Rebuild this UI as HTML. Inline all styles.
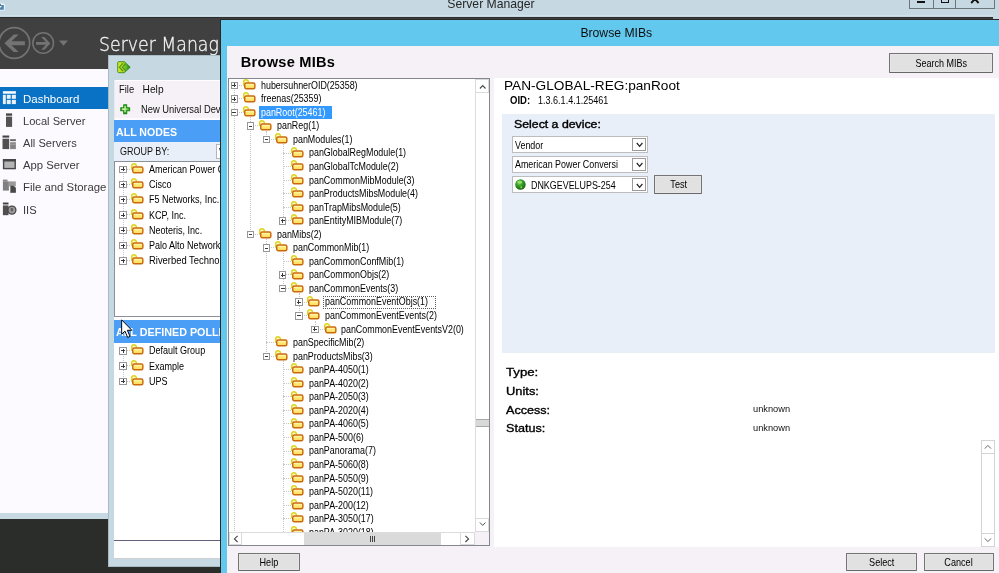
<!DOCTYPE html>
<html><head><meta charset="utf-8"><title>Server Manager</title>
<style>
html,body{margin:0;padding:0}
body{width:999px;height:573px;overflow:hidden;position:relative;background:#2b2d2b;font-family:"Liberation Sans",sans-serif;color:#000}
.a{position:absolute}
.sx{display:inline-block;transform-origin:0 50%;white-space:pre}
.t{position:absolute;white-space:pre;line-height:1}
svg{position:absolute;overflow:visible}
.fo{position:absolute}
/* tree */
.row{position:absolute;left:0;height:13.55px;white-space:pre}
.row .tx{position:absolute;top:0;font-size:11px;line-height:13.55px;color:#000}
.box{position:absolute;width:5.6px;height:5.6px;border:0.9px solid #979797;background:#fff}
.box i{position:absolute;left:0.9px;right:0.9px;top:2.35px;height:0.9px;background:#3a3a3a}
.box b{position:absolute;top:0.9px;bottom:0.9px;left:2.35px;width:0.9px;background:#3a3a3a}
.hl{position:absolute;border-top:1px dotted #c6c6c6;height:0}
.vl{position:absolute;border-left:1px dotted #c6c6c6;width:0}
.btn{position:absolute;box-sizing:border-box;border:1px solid #747474;border-bottom-color:#686868;border-radius:1px;background:#e1e1e1;box-shadow:inset 0 0 0 1px #e6e6e6;text-align:center;font-size:10.6px;color:#000}
.btn .sx{transform-origin:50% 50%}
.combo{position:absolute;box-sizing:border-box;border:1px solid #bdbdbd;background:#fff}
.combo .dd{position:absolute;right:1px;top:1px;bottom:1px;width:13.6px;box-sizing:border-box;border:1px solid #9a9a9a;background:#fff}
.nav{position:absolute;left:23.4px;font-size:11.7px;color:#3b3b3b;line-height:1;white-space:pre}
</style></head><body>
<div id="screen" style="position:absolute;left:0;top:0;width:999px;height:573px;overflow:hidden;will-change:transform">
<svg width="0" height="0" style="position:absolute"><defs>
<linearGradient id="fg" x1="0" y1="0" x2="0" y2="1"><stop offset="0" stop-color="#fffbd0"/><stop offset="0.5" stop-color="#ffea70"/><stop offset="1" stop-color="#ffd668"/></linearGradient>
<radialGradient id="gb" cx="0.4" cy="0.35" r="0.7"><stop offset="0" stop-color="#7ed04c"/><stop offset="0.5" stop-color="#2c9826"/><stop offset="1" stop-color="#156214"/></radialGradient>
</defs></svg>

<div class="a" id="sm" style="left:0;top:0;width:999px;height:519.2px;background:#c6d9e2"></div>
<div class="a" style="left:0;top:16.8px;width:993px;height:52.4px;background:#404040"></div>
<div class="a" style="left:0;top:16.6px;width:993px;height:1px;background:#2e2c2c"></div>
<div class="a" style="left:0;top:69px;width:993px;height:444.2px;background:#fdfaff"></div>
<div class="t" style="left:447.3px;top:-2.1px;font-size:12.2px;color:#262626">Server Manager</div>
<svg style="left:0;top:1px" width="6" height="10" viewBox="0 0 6 10"><path d="M-2 2.2 H1.6 V3.4 H3.6 Q4.4 3.4 4.4 4.2 V8.4 Q4.4 9.2 3.6 9.2 H-2 Z" fill="#4f85ad" stroke="#eef5f9" stroke-width="1.1"/><path d="M-1 5 H1.8 L1 6.4 H-1 Z" fill="#e8f1f6"/></svg>
<div class="a" style="left:0;top:15.2px;width:993px;height:1.3px;background:#cfe1e9"></div>
<div class="a" style="left:909.2px;top:-10px;width:85.8px;height:18.6px;box-sizing:border-box;border:1px solid #6f767b"></div>
<div class="a" style="left:933.2px;top:-10px;width:1px;height:18px;background:#6f767b"></div>
<div class="a" style="left:955px;top:-10px;width:1px;height:18px;background:#6f767b"></div>
<div class="a" style="left:917px;top:0.7px;width:8.2px;height:2.4px;background:#111"></div>
<div class="a" style="left:940.8px;top:-6px;width:8.4px;height:8.7px;box-sizing:border-box;border:1.9px solid #111"></div>
<svg style="left:970px;top:-6px" width="10" height="10" viewBox="0 0 10 10"><path d="M1.2 1 L8.6 9 M8.6 1 L1.2 9" stroke="#111" stroke-width="1.9" fill="none"/></svg>
<svg style="left:0;top:0" width="80" height="69" viewBox="0 0 80 69"><circle cx="14.3" cy="43.05" r="15.4" fill="none" stroke="#737373" stroke-width="1.7"/><path d="M4.4 43.25 L13.8 34.4 H18.7 L11.5 41.3 H24.9 V45.2 H11.5 L18.7 52.1 H13.8 Z" fill="#737373"/><circle cx="43.15" cy="43" r="10.35" fill="none" stroke="#737373" stroke-width="1.5"/><path d="M41.2 37 H44.4 L50.3 43.4 L44.4 49.8 H41.2 L45.9 44.8 H36.1 V42 H45.9 Z" fill="#737373"/><path d="M59 40.5 H68 L63.5 45.8 Z" fill="#737373"/></svg>
<div class="t" style="left:98.8px;top:34.7px;font-family:'DejaVu Sans','Liberation Sans',sans-serif;font-weight:200;font-size:19.9px;color:#f6f6f6;-webkit-text-stroke:0.3px #f6f6f6"><span class="sx" style="transform:scaleX(0.871);">Server Manager</span></div>
<div class="a" style="left:0;top:87.2px;width:108.4px;height:21.6px;background:#0a72c4"></div>
<div class="nav" style="top:93.4px;color:#fff;"><span class="sx" style="transform:scaleX(0.985);">Dashboard</span></div>
<div class="nav" style="top:115.4px;"><span class="sx" style="transform:scaleX(0.95);">Local Server</span></div>
<div class="nav" style="top:137.2px;"><span class="sx" style="transform:scaleX(0.95);">All Servers</span></div>
<div class="nav" style="top:159.3px;"><span class="sx" style="transform:scaleX(0.965);">App Server</span></div>
<div class="nav" style="top:181.4px;"><span class="sx" style="transform:scaleX(0.972);">File and Storage Services</span></div>
<div class="nav" style="top:203.5px;"><span class="sx" style="transform:scaleX(0.95);">IIS</span></div>
<svg style="left:0;top:0" width="20" height="152" viewBox="0 0 20 152"><rect x="2.9" y="91.2" width="13" height="2.5" fill="#fff"/><rect x="2.9" y="94.8" width="2.9" height="9.3" fill="#fff" opacity="0.9"/><rect x="6.8" y="94.8" width="3.9" height="4" fill="#fff" opacity="0.9"/><rect x="11.8" y="94.8" width="4.1" height="4" fill="#fff" opacity="0.9"/><rect x="6.8" y="99.9" width="3.9" height="4.2" fill="#fff" opacity="0.9"/><rect x="11.8" y="99.9" width="4.1" height="4.2" fill="#fff" opacity="0.9"/><rect x="6" y="113.4" width="6.1" height="2.3" fill="#444"/><rect x="6" y="116.6" width="6.1" height="10.3" fill="#545454"/><rect x="2.5" y="135.5" width="6.7" height="2.1" fill="#444"/><rect x="2.5" y="138.7" width="6.7" height="10.4" fill="#505050"/><rect x="10.1" y="139.2" width="5.8" height="1.9" fill="#666"/><rect x="10.1" y="142.2" width="5.8" height="6.9" fill="#858585"/><rect x="10.1" y="143.8" width="5.8" height="0.7" fill="#b0b0b0"/></svg>
<svg style="left:0;top:152px" width="20" height="66" viewBox="0 152 20 66"><rect x="3.6" y="159.8" width="11.6" height="8.8" fill="#b4b4b4" stroke="#464646" stroke-width="1.4"/><rect x="2.9" y="159.1" width="13" height="2.4" fill="#464646"/><rect x="2.9" y="179.6" width="4.6" height="2" fill="#858585"/><rect x="2.9" y="181.4" width="6" height="9.2" fill="#808080"/><rect x="8.6" y="181.4" width="7.2" height="5" fill="#9a9a9a"/><rect x="10" y="185.8" width="5.9" height="7" fill="#484848"/><path d="M13.6 185.8 H15.9 V188 Z" fill="#e6e6e6"/><rect x="10" y="185.8" width="0.8" height="7" fill="#dcdcdc" opacity="0.5"/><rect x="2.9" y="202.5" width="5.6" height="2" fill="#444"/><rect x="2.9" y="205.4" width="5.6" height="9.8" fill="#505050"/><circle cx="11.9" cy="210.1" r="4" fill="#9c9c9c" stroke="#474747" stroke-width="1.3"/><path d="M10.6 208.4 Q12 207.6 13.2 208.6 Q13.6 210 12.6 211.2 Q11.4 211.8 10.8 210.8 Z" fill="#5e5e5e"/></svg><div class="a" id="w2" style="left:108px;top:54.5px;width:125px;height:512px;box-sizing:border-box;background:#c6d9e2;border:1px solid #a9bcc6"></div>
<div class="a" style="left:114.4px;top:80px;width:112px;height:479.2px;background:#fff"></div>
<svg style="left:116.6px;top:60.6px" width="14" height="13" viewBox="0 0 14 13"><defs><linearGradient id="lg1" x1="0" y1="0" x2="1" y2="0"><stop offset="0" stop-color="#dfee2c"/><stop offset="0.45" stop-color="#a8d424"/><stop offset="0.75" stop-color="#4aae2c"/><stop offset="1" stop-color="#1f7a1c"/></linearGradient></defs><path d="M0.7 1.8 Q0.7 0.7 1.9 0.7 H7.4 L13.2 6.2 L7.4 11.7 H1.9 Q0.7 11.7 0.7 10.6 Z" fill="url(#lg1)" stroke="#3a8c1c" stroke-width="0.9" stroke-linejoin="round"/><path d="M5.8 2.4 L2.4 6.2 L5.8 10 M8.6 2.8 L5.4 6.2 L8.6 9.6" fill="none" stroke="#3f8a18" stroke-width="1.2" opacity="0.85"/></svg>
<div class="a" style="left:114.4px;top:80px;width:112px;height:39.6px;background:#f6f1f6"></div>
<div class="a" style="left:114.4px;top:80px;width:112px;height:1px;background:#fff"></div>
<div class="t" style="left:118.8px;top:85.1px;font-size:10.2px;color:#111"><span class="sx" style="transform:scaleX(0.92);">File</span></div>
<div class="t" style="left:142.6px;top:85.1px;font-size:10.2px;color:#111"><span class="sx" style="transform:scaleX(1.0);">Help</span></div>
<svg style="left:120px;top:103.8px" width="10.4" height="10.4" viewBox="0 0 11 11"><defs><linearGradient id="pg" x1="0" y1="0" x2="1" y2="0"><stop offset="0" stop-color="#fffbd0"/><stop offset="0.45" stop-color="#e4ffd0"/><stop offset="1" stop-color="#4cc42a"/></linearGradient></defs><path d="M3.9 0.8 H7.1 V3.9 H10.2 V7.1 H7.1 V10.2 H3.9 V7.1 H0.8 V3.9 H3.9 Z" fill="#3fb41c" stroke="#23861a" stroke-width="1.1" stroke-linejoin="round"/><path d="M4.8 2.2 H6 V4.8 H8.6 V6 H6 V8.6 H4.8 V6 H2.2 V4.8 H4.8 Z" fill="url(#pg)"/></svg>
<div class="a" style="left:114.4px;top:118px;width:112px;height:1.6px;background:#fdfbfd"></div>
<div class="a" style="left:114.4px;top:80px;width:1px;height:39.6px;background:#e6ecf2"></div>
<div class="t" style="left:141px;top:104.9px;font-size:10.4px;color:#111"><span class="sx" style="transform:scaleX(0.9);">New Universal Device Poller</span></div>
<div class="a" style="left:114.4px;top:119.5px;width:112px;height:22.4px;background:#4a9ef6"></div>
<div class="t" style="left:116.2px;top:127.9px;font-size:10.4px;font-weight:bold;color:#fff"><span class="sx" style="transform:scaleX(1.02);">ALL NODES</span></div>
<div class="a" style="left:114.4px;top:141.9px;width:112px;height:19.2px;background:#e8eff8"></div>
<div class="t" style="left:119.8px;top:146.7px;font-size:10.4px;color:#111"><span class="sx" style="transform:scaleX(0.865);">GROUP BY:</span></div>
<div class="a" style="left:216.4px;top:144.4px;width:20px;height:15px;box-sizing:border-box;border:1px solid #b5b5b5;background:#fff"></div>
<div class="t" style="left:218.6px;top:146.6px;font-size:11px;color:#111"><span class="sx" style="transform:scaleX(0.81);">Vendor</span></div>
<div class="a" style="left:114.4px;top:160.9px;width:112px;height:156.4px;box-sizing:border-box;border:1px solid #8a8f98;border-right:none;background:#fff"></div>
<div class="vl" style="left:123.1px;top:169.2px;height:91.4px"></div>
<div class="hl" style="left:123.1px;top:168.7px;width:9px"></div>
<div class="box" style="left:119.4px;top:165.6px"><i></i><b></b></div>
<svg class="fo" style="left:131.4px;top:162.8px" width="13" height="11" viewBox="0 0 13 11"><path d="M0.75 6 V2.8 Q0.75 0.75 2.9 0.75 Q5 0.75 5.7 3.2" fill="#fffbc4" stroke="#dcd31a" stroke-width="1.4"/><rect x="1.75" y="3.95" width="10.1" height="5.7" rx="1.5" fill="url(#fg)" stroke="#cb6a0c" stroke-width="1.45"/></svg>
<div class="t" style="left:149.3px;top:162.8px;font-size:11px;line-height:13px"><span class="sx" style="transform:scaleX(0.82);">American Power Conversion Corp.</span></div>
<div class="hl" style="left:123.1px;top:183.9px;width:9px"></div>
<div class="box" style="left:119.4px;top:180.8px"><i></i><b></b></div>
<svg class="fo" style="left:131.4px;top:178.0px" width="13" height="11" viewBox="0 0 13 11"><path d="M0.75 6 V2.8 Q0.75 0.75 2.9 0.75 Q5 0.75 5.7 3.2" fill="#fffbc4" stroke="#dcd31a" stroke-width="1.4"/><rect x="1.75" y="3.95" width="10.1" height="5.7" rx="1.5" fill="url(#fg)" stroke="#cb6a0c" stroke-width="1.45"/></svg>
<div class="t" style="left:149.3px;top:178.0px;font-size:11px;line-height:13px"><span class="sx" style="transform:scaleX(0.82);">Cisco</span></div>
<div class="hl" style="left:123.1px;top:199.2px;width:9px"></div>
<div class="box" style="left:119.4px;top:196.1px"><i></i><b></b></div>
<svg class="fo" style="left:131.4px;top:193.3px" width="13" height="11" viewBox="0 0 13 11"><path d="M0.75 6 V2.8 Q0.75 0.75 2.9 0.75 Q5 0.75 5.7 3.2" fill="#fffbc4" stroke="#dcd31a" stroke-width="1.4"/><rect x="1.75" y="3.95" width="10.1" height="5.7" rx="1.5" fill="url(#fg)" stroke="#cb6a0c" stroke-width="1.45"/></svg>
<div class="t" style="left:149.3px;top:193.3px;font-size:11px;line-height:13px"><span class="sx" style="transform:scaleX(0.82);">F5 Networks, Inc.</span></div>
<div class="hl" style="left:123.1px;top:214.4px;width:9px"></div>
<div class="box" style="left:119.4px;top:211.3px"><i></i><b></b></div>
<svg class="fo" style="left:131.4px;top:208.5px" width="13" height="11" viewBox="0 0 13 11"><path d="M0.75 6 V2.8 Q0.75 0.75 2.9 0.75 Q5 0.75 5.7 3.2" fill="#fffbc4" stroke="#dcd31a" stroke-width="1.4"/><rect x="1.75" y="3.95" width="10.1" height="5.7" rx="1.5" fill="url(#fg)" stroke="#cb6a0c" stroke-width="1.45"/></svg>
<div class="t" style="left:149.3px;top:208.5px;font-size:11px;line-height:13px"><span class="sx" style="transform:scaleX(0.82);">KCP, Inc.</span></div>
<div class="hl" style="left:123.1px;top:229.6px;width:9px"></div>
<div class="box" style="left:119.4px;top:226.5px"><i></i><b></b></div>
<svg class="fo" style="left:131.4px;top:223.7px" width="13" height="11" viewBox="0 0 13 11"><path d="M0.75 6 V2.8 Q0.75 0.75 2.9 0.75 Q5 0.75 5.7 3.2" fill="#fffbc4" stroke="#dcd31a" stroke-width="1.4"/><rect x="1.75" y="3.95" width="10.1" height="5.7" rx="1.5" fill="url(#fg)" stroke="#cb6a0c" stroke-width="1.45"/></svg>
<div class="t" style="left:149.3px;top:223.7px;font-size:11px;line-height:13px"><span class="sx" style="transform:scaleX(0.82);">Neoteris, Inc.</span></div>
<div class="hl" style="left:123.1px;top:244.8px;width:9px"></div>
<div class="box" style="left:119.4px;top:241.8px"><i></i><b></b></div>
<svg class="fo" style="left:131.4px;top:238.9px" width="13" height="11" viewBox="0 0 13 11"><path d="M0.75 6 V2.8 Q0.75 0.75 2.9 0.75 Q5 0.75 5.7 3.2" fill="#fffbc4" stroke="#dcd31a" stroke-width="1.4"/><rect x="1.75" y="3.95" width="10.1" height="5.7" rx="1.5" fill="url(#fg)" stroke="#cb6a0c" stroke-width="1.45"/></svg>
<div class="t" style="left:149.3px;top:238.9px;font-size:11px;line-height:13px"><span class="sx" style="transform:scaleX(0.82);">Palo Alto Networks</span></div>
<div class="hl" style="left:123.1px;top:260.1px;width:9px"></div>
<div class="box" style="left:119.4px;top:257.0px"><i></i><b></b></div>
<svg class="fo" style="left:131.4px;top:254.2px" width="13" height="11" viewBox="0 0 13 11"><path d="M0.75 6 V2.8 Q0.75 0.75 2.9 0.75 Q5 0.75 5.7 3.2" fill="#fffbc4" stroke="#dcd31a" stroke-width="1.4"/><rect x="1.75" y="3.95" width="10.1" height="5.7" rx="1.5" fill="url(#fg)" stroke="#cb6a0c" stroke-width="1.45"/></svg>
<div class="t" style="left:149.3px;top:254.2px;font-size:11px;line-height:13px"><span class="sx" style="transform:scaleX(0.855);">Riverbed Technology, Inc.</span></div>
<div class="a" style="left:114.4px;top:319.8px;width:112px;height:22.9px;background:#4a9ef6"></div>
<div class="t" style="left:116.2px;top:328px;font-size:10.4px;font-weight:bold;color:#fff"><span class="sx" style="transform:scaleX(1.035);">ALL DEFINED POLLERS</span></div>
<div class="vl" style="left:123.1px;top:350.7px;height:30.5px"></div>
<div class="hl" style="left:123.1px;top:350.2px;width:9px"></div>
<div class="box" style="left:119.4px;top:347.1px"><i></i><b></b></div>
<svg class="fo" style="left:131.4px;top:344.3px" width="13" height="11" viewBox="0 0 13 11"><path d="M0.75 6 V2.8 Q0.75 0.75 2.9 0.75 Q5 0.75 5.7 3.2" fill="#fffbc4" stroke="#dcd31a" stroke-width="1.4"/><rect x="1.75" y="3.95" width="10.1" height="5.7" rx="1.5" fill="url(#fg)" stroke="#cb6a0c" stroke-width="1.45"/></svg>
<div class="t" style="left:149.3px;top:344.3px;font-size:11px;line-height:13px"><span class="sx" style="transform:scaleX(0.82);">Default Group</span></div>
<div class="hl" style="left:123.1px;top:365.4px;width:9px"></div>
<div class="box" style="left:119.4px;top:362.3px"><i></i><b></b></div>
<svg class="fo" style="left:131.4px;top:359.5px" width="13" height="11" viewBox="0 0 13 11"><path d="M0.75 6 V2.8 Q0.75 0.75 2.9 0.75 Q5 0.75 5.7 3.2" fill="#fffbc4" stroke="#dcd31a" stroke-width="1.4"/><rect x="1.75" y="3.95" width="10.1" height="5.7" rx="1.5" fill="url(#fg)" stroke="#cb6a0c" stroke-width="1.45"/></svg>
<div class="t" style="left:149.3px;top:359.5px;font-size:11px;line-height:13px"><span class="sx" style="transform:scaleX(0.82);">Example</span></div>
<div class="hl" style="left:123.1px;top:380.7px;width:9px"></div>
<div class="box" style="left:119.4px;top:377.6px"><i></i><b></b></div>
<svg class="fo" style="left:131.4px;top:374.8px" width="13" height="11" viewBox="0 0 13 11"><path d="M0.75 6 V2.8 Q0.75 0.75 2.9 0.75 Q5 0.75 5.7 3.2" fill="#fffbc4" stroke="#dcd31a" stroke-width="1.4"/><rect x="1.75" y="3.95" width="10.1" height="5.7" rx="1.5" fill="url(#fg)" stroke="#cb6a0c" stroke-width="1.45"/></svg>
<div class="t" style="left:149.3px;top:374.8px;font-size:11px;line-height:13px"><span class="sx" style="transform:scaleX(0.82);">UPS</span></div>
<div class="a" style="left:114.4px;top:540.3px;width:112px;height:1px;background:#5f5f7a"></div>
<div class="a" style="left:114.4px;top:558.3px;width:112px;height:1px;background:#d2cfd2"></div>
<svg style="left:121px;top:319.3px" width="12.9" height="20.4" viewBox="0 0 12 19"><path d="M0.6 0.8 V14.2 L3.7 11.3 L6.2 17.2 L8.4 16.2 L5.9 10.5 H10.1 Z" fill="#fff" stroke="#000" stroke-width="0.9" stroke-linejoin="miter"/></svg><div class="a" id="dlg" style="left:220.4px;top:19.3px;width:790px;height:570px;box-sizing:border-box;background:#62c8ee;border:1px solid #2b2727"></div>
<div class="t" style="left:580.4px;top:27.3px;font-size:12.2px;color:#101010">Browse MIBs</div>
<div class="a" style="left:227.3px;top:45.6px;width:780px;height:540px;background:#f6f1f6"></div>
<div class="t" style="left:240.8px;top:55.2px;font-size:14.6px;font-weight:bold;color:#000;letter-spacing:0.25px"><span class="sx" style="transform:scaleX(1.0);">Browse MIBs</span></div>
<div class="btn" style="left:888.8px;top:53.3px;width:104.4px;height:19.4px;line-height:19.2px"><span class="sx" style="transform:scaleX(0.85);">Search MIBs</span></div>
<div class="a" id="tree" style="left:227.6px;top:78px;width:262.2px;height:468.4px;box-sizing:border-box;border:1px solid #828790;background:#fff;overflow:hidden"></div>
<div class="a" style="left:228.6px;top:79px;width:245.79999999999998px;height:453.20000000000005px;overflow:hidden">
<div class="vl" style="left:21.8px;top:38.3px;height:116.9px"></div>
<div class="vl" style="left:37.9px;top:51.9px;height:8.5px"></div>
<div class="vl" style="left:54.0px;top:65.4px;height:76.3px"></div>
<div class="vl" style="left:37.9px;top:160.2px;height:116.9px"></div>
<div class="vl" style="left:54.0px;top:173.8px;height:35.6px"></div>
<div class="vl" style="left:70.1px;top:214.4px;height:22.1px"></div>
<div class="vl" style="left:86.2px;top:241.6px;height:8.6px"></div>
<div class="vl" style="left:54.0px;top:282.2px;height:171.2px"></div>
<div class="vl" style="left:5.7px;top:6.2px;height:513.4px"></div>
<div class="vl" style="left:54.0px;top:277.2px;height:400px"></div>
<div class="hl" style="left:5.7px;top:5.7px;width:10px"></div>
<div class="box" style="left:2.0px;top:2.6px"><i></i><b></b></div>
<svg class="fo" style="left:14.5px;top:-0.2px" width="13" height="11" viewBox="0 0 13 11"><path d="M0.75 6 V2.8 Q0.75 0.75 2.9 0.75 Q5 0.75 5.7 3.2" fill="#fffbc4" stroke="#dcd31a" stroke-width="1.4"/><rect x="1.75" y="3.95" width="10.1" height="5.7" rx="1.5" fill="url(#fg)" stroke="#cb6a0c" stroke-width="1.45"/></svg>
<div class="t" style="left:32.0px;top:-0.4px;font-size:11px;line-height:13px;"><span class="sx" style="transform:scaleX(0.81);">hubersuhnerOID(25358)</span></div>
<div class="hl" style="left:5.7px;top:19.3px;width:10px"></div>
<div class="box" style="left:2.0px;top:16.2px"><i></i><b></b></div>
<svg class="fo" style="left:14.5px;top:13.4px" width="13" height="11" viewBox="0 0 13 11"><path d="M0.75 6 V2.8 Q0.75 0.75 2.9 0.75 Q5 0.75 5.7 3.2" fill="#fffbc4" stroke="#dcd31a" stroke-width="1.4"/><rect x="1.75" y="3.95" width="10.1" height="5.7" rx="1.5" fill="url(#fg)" stroke="#cb6a0c" stroke-width="1.45"/></svg>
<div class="t" style="left:32.0px;top:13.2px;font-size:11px;line-height:13px;"><span class="sx" style="transform:scaleX(0.81);">freenas(25359)</span></div>
<div class="hl" style="left:5.7px;top:32.8px;width:10px"></div>
<div class="box" style="left:2.0px;top:29.7px"><i></i></div>
<svg class="fo" style="left:14.5px;top:26.9px" width="13" height="11" viewBox="0 0 13 11"><path d="M0.75 6 V2.8 Q0.75 0.75 2.9 0.75 Q5 0.75 5.7 3.2" fill="#fffbc4" stroke="#dcd31a" stroke-width="1.4"/><rect x="1.75" y="3.95" width="10.1" height="5.7" rx="1.5" fill="url(#fg)" stroke="#cb6a0c" stroke-width="1.45"/></svg>
<div class="a" style="left:30.2px;top:26.5px;width:72.8px;height:13.4px;background:#3399ff"></div>
<div class="t" style="left:32.0px;top:26.7px;font-size:11px;line-height:13px;color:#fff;"><span class="sx" style="transform:scaleX(0.81);">panRoot(25461)</span></div>
<div class="hl" style="left:21.8px;top:46.4px;width:10px"></div>
<div class="box" style="left:18.1px;top:43.3px"><i></i></div>
<svg class="fo" style="left:30.6px;top:40.5px" width="13" height="11" viewBox="0 0 13 11"><path d="M0.75 6 V2.8 Q0.75 0.75 2.9 0.75 Q5 0.75 5.7 3.2" fill="#fffbc4" stroke="#dcd31a" stroke-width="1.4"/><rect x="1.75" y="3.95" width="10.1" height="5.7" rx="1.5" fill="url(#fg)" stroke="#cb6a0c" stroke-width="1.45"/></svg>
<div class="t" style="left:48.1px;top:40.3px;font-size:11px;line-height:13px;"><span class="sx" style="transform:scaleX(0.81);">panReg(1)</span></div>
<div class="hl" style="left:37.9px;top:59.9px;width:10px"></div>
<div class="box" style="left:34.2px;top:56.8px"><i></i></div>
<svg class="fo" style="left:46.7px;top:54.0px" width="13" height="11" viewBox="0 0 13 11"><path d="M0.75 6 V2.8 Q0.75 0.75 2.9 0.75 Q5 0.75 5.7 3.2" fill="#fffbc4" stroke="#dcd31a" stroke-width="1.4"/><rect x="1.75" y="3.95" width="10.1" height="5.7" rx="1.5" fill="url(#fg)" stroke="#cb6a0c" stroke-width="1.45"/></svg>
<div class="t" style="left:64.2px;top:53.8px;font-size:11px;line-height:13px;"><span class="sx" style="transform:scaleX(0.81);">panModules(1)</span></div>
<div class="hl" style="left:54.0px;top:73.5px;width:10px"></div>
<svg class="fo" style="left:62.8px;top:67.5px" width="13" height="11" viewBox="0 0 13 11"><path d="M0.75 6 V2.8 Q0.75 0.75 2.9 0.75 Q5 0.75 5.7 3.2" fill="#fffbc4" stroke="#dcd31a" stroke-width="1.4"/><rect x="1.75" y="3.95" width="10.1" height="5.7" rx="1.5" fill="url(#fg)" stroke="#cb6a0c" stroke-width="1.45"/></svg>
<div class="t" style="left:80.3px;top:67.4px;font-size:11px;line-height:13px;"><span class="sx" style="transform:scaleX(0.81);">panGlobalRegModule(1)</span></div>
<div class="hl" style="left:54.0px;top:87.0px;width:10px"></div>
<svg class="fo" style="left:62.8px;top:81.1px" width="13" height="11" viewBox="0 0 13 11"><path d="M0.75 6 V2.8 Q0.75 0.75 2.9 0.75 Q5 0.75 5.7 3.2" fill="#fffbc4" stroke="#dcd31a" stroke-width="1.4"/><rect x="1.75" y="3.95" width="10.1" height="5.7" rx="1.5" fill="url(#fg)" stroke="#cb6a0c" stroke-width="1.45"/></svg>
<div class="t" style="left:80.3px;top:80.9px;font-size:11px;line-height:13px;"><span class="sx" style="transform:scaleX(0.81);">panGlobalTcModule(2)</span></div>
<div class="hl" style="left:54.0px;top:100.6px;width:10px"></div>
<svg class="fo" style="left:62.8px;top:94.7px" width="13" height="11" viewBox="0 0 13 11"><path d="M0.75 6 V2.8 Q0.75 0.75 2.9 0.75 Q5 0.75 5.7 3.2" fill="#fffbc4" stroke="#dcd31a" stroke-width="1.4"/><rect x="1.75" y="3.95" width="10.1" height="5.7" rx="1.5" fill="url(#fg)" stroke="#cb6a0c" stroke-width="1.45"/></svg>
<div class="t" style="left:80.3px;top:94.5px;font-size:11px;line-height:13px;"><span class="sx" style="transform:scaleX(0.81);">panCommonMibModule(3)</span></div>
<div class="hl" style="left:54.0px;top:114.1px;width:10px"></div>
<svg class="fo" style="left:62.8px;top:108.2px" width="13" height="11" viewBox="0 0 13 11"><path d="M0.75 6 V2.8 Q0.75 0.75 2.9 0.75 Q5 0.75 5.7 3.2" fill="#fffbc4" stroke="#dcd31a" stroke-width="1.4"/><rect x="1.75" y="3.95" width="10.1" height="5.7" rx="1.5" fill="url(#fg)" stroke="#cb6a0c" stroke-width="1.45"/></svg>
<div class="t" style="left:80.3px;top:108.0px;font-size:11px;line-height:13px;"><span class="sx" style="transform:scaleX(0.81);">panProductsMibsModule(4)</span></div>
<div class="hl" style="left:54.0px;top:127.7px;width:10px"></div>
<svg class="fo" style="left:62.8px;top:121.8px" width="13" height="11" viewBox="0 0 13 11"><path d="M0.75 6 V2.8 Q0.75 0.75 2.9 0.75 Q5 0.75 5.7 3.2" fill="#fffbc4" stroke="#dcd31a" stroke-width="1.4"/><rect x="1.75" y="3.95" width="10.1" height="5.7" rx="1.5" fill="url(#fg)" stroke="#cb6a0c" stroke-width="1.45"/></svg>
<div class="t" style="left:80.3px;top:121.6px;font-size:11px;line-height:13px;"><span class="sx" style="transform:scaleX(0.81);">panTrapMibsModule(5)</span></div>
<div class="hl" style="left:54.0px;top:141.2px;width:10px"></div>
<div class="box" style="left:50.3px;top:138.1px"><i></i><b></b></div>
<svg class="fo" style="left:62.8px;top:135.3px" width="13" height="11" viewBox="0 0 13 11"><path d="M0.75 6 V2.8 Q0.75 0.75 2.9 0.75 Q5 0.75 5.7 3.2" fill="#fffbc4" stroke="#dcd31a" stroke-width="1.4"/><rect x="1.75" y="3.95" width="10.1" height="5.7" rx="1.5" fill="url(#fg)" stroke="#cb6a0c" stroke-width="1.45"/></svg>
<div class="t" style="left:80.3px;top:135.1px;font-size:11px;line-height:13px;"><span class="sx" style="transform:scaleX(0.81);">panEntityMIBModule(7)</span></div>
<div class="hl" style="left:21.8px;top:154.8px;width:10px"></div>
<div class="box" style="left:18.1px;top:151.7px"><i></i></div>
<svg class="fo" style="left:30.6px;top:148.8px" width="13" height="11" viewBox="0 0 13 11"><path d="M0.75 6 V2.8 Q0.75 0.75 2.9 0.75 Q5 0.75 5.7 3.2" fill="#fffbc4" stroke="#dcd31a" stroke-width="1.4"/><rect x="1.75" y="3.95" width="10.1" height="5.7" rx="1.5" fill="url(#fg)" stroke="#cb6a0c" stroke-width="1.45"/></svg>
<div class="t" style="left:48.1px;top:148.7px;font-size:11px;line-height:13px;"><span class="sx" style="transform:scaleX(0.81);">panMibs(2)</span></div>
<div class="hl" style="left:37.9px;top:168.3px;width:10px"></div>
<div class="box" style="left:34.2px;top:165.2px"><i></i></div>
<svg class="fo" style="left:46.7px;top:162.4px" width="13" height="11" viewBox="0 0 13 11"><path d="M0.75 6 V2.8 Q0.75 0.75 2.9 0.75 Q5 0.75 5.7 3.2" fill="#fffbc4" stroke="#dcd31a" stroke-width="1.4"/><rect x="1.75" y="3.95" width="10.1" height="5.7" rx="1.5" fill="url(#fg)" stroke="#cb6a0c" stroke-width="1.45"/></svg>
<div class="t" style="left:64.2px;top:162.2px;font-size:11px;line-height:13px;"><span class="sx" style="transform:scaleX(0.81);">panCommonMib(1)</span></div>
<div class="hl" style="left:54.0px;top:181.9px;width:10px"></div>
<svg class="fo" style="left:62.8px;top:176.0px" width="13" height="11" viewBox="0 0 13 11"><path d="M0.75 6 V2.8 Q0.75 0.75 2.9 0.75 Q5 0.75 5.7 3.2" fill="#fffbc4" stroke="#dcd31a" stroke-width="1.4"/><rect x="1.75" y="3.95" width="10.1" height="5.7" rx="1.5" fill="url(#fg)" stroke="#cb6a0c" stroke-width="1.45"/></svg>
<div class="t" style="left:80.3px;top:175.8px;font-size:11px;line-height:13px;"><span class="sx" style="transform:scaleX(0.81);">panCommonConfMib(1)</span></div>
<div class="hl" style="left:54.0px;top:195.4px;width:10px"></div>
<div class="box" style="left:50.3px;top:192.3px"><i></i><b></b></div>
<svg class="fo" style="left:62.8px;top:189.5px" width="13" height="11" viewBox="0 0 13 11"><path d="M0.75 6 V2.8 Q0.75 0.75 2.9 0.75 Q5 0.75 5.7 3.2" fill="#fffbc4" stroke="#dcd31a" stroke-width="1.4"/><rect x="1.75" y="3.95" width="10.1" height="5.7" rx="1.5" fill="url(#fg)" stroke="#cb6a0c" stroke-width="1.45"/></svg>
<div class="t" style="left:80.3px;top:189.3px;font-size:11px;line-height:13px;"><span class="sx" style="transform:scaleX(0.81);">panCommonObjs(2)</span></div>
<div class="hl" style="left:54.0px;top:208.9px;width:10px"></div>
<div class="box" style="left:50.3px;top:205.8px"><i></i></div>
<svg class="fo" style="left:62.8px;top:203.0px" width="13" height="11" viewBox="0 0 13 11"><path d="M0.75 6 V2.8 Q0.75 0.75 2.9 0.75 Q5 0.75 5.7 3.2" fill="#fffbc4" stroke="#dcd31a" stroke-width="1.4"/><rect x="1.75" y="3.95" width="10.1" height="5.7" rx="1.5" fill="url(#fg)" stroke="#cb6a0c" stroke-width="1.45"/></svg>
<div class="t" style="left:80.3px;top:202.8px;font-size:11px;line-height:13px;"><span class="sx" style="transform:scaleX(0.81);">panCommonEvents(3)</span></div>
<div class="hl" style="left:70.1px;top:222.5px;width:10px"></div>
<div class="box" style="left:66.4px;top:219.4px"><i></i><b></b></div>
<svg class="fo" style="left:78.9px;top:216.6px" width="13" height="11" viewBox="0 0 13 11"><path d="M0.75 6 V2.8 Q0.75 0.75 2.9 0.75 Q5 0.75 5.7 3.2" fill="#fffbc4" stroke="#dcd31a" stroke-width="1.4"/><rect x="1.75" y="3.95" width="10.1" height="5.7" rx="1.5" fill="url(#fg)" stroke="#cb6a0c" stroke-width="1.45"/></svg>
<div class="a" style="left:94.2px;top:216.6px;width:113.4px;height:13.6px;box-sizing:border-box;border:1px dotted #5a5a5a"></div>
<div class="t" style="left:96.4px;top:216.4px;font-size:11px;line-height:13px;"><span class="sx" style="transform:scaleX(0.81);">panCommonEventObjs(1)</span></div>
<div class="hl" style="left:70.1px;top:236.1px;width:10px"></div>
<div class="box" style="left:66.4px;top:233.0px"><i></i></div>
<svg class="fo" style="left:78.9px;top:230.2px" width="13" height="11" viewBox="0 0 13 11"><path d="M0.75 6 V2.8 Q0.75 0.75 2.9 0.75 Q5 0.75 5.7 3.2" fill="#fffbc4" stroke="#dcd31a" stroke-width="1.4"/><rect x="1.75" y="3.95" width="10.1" height="5.7" rx="1.5" fill="url(#fg)" stroke="#cb6a0c" stroke-width="1.45"/></svg>
<div class="t" style="left:96.4px;top:230.0px;font-size:11px;line-height:13px;"><span class="sx" style="transform:scaleX(0.81);">panCommonEventEvents(2)</span></div>
<div class="hl" style="left:86.2px;top:249.6px;width:10px"></div>
<div class="box" style="left:82.5px;top:246.5px"><i></i><b></b></div>
<svg class="fo" style="left:95.0px;top:243.7px" width="13" height="11" viewBox="0 0 13 11"><path d="M0.75 6 V2.8 Q0.75 0.75 2.9 0.75 Q5 0.75 5.7 3.2" fill="#fffbc4" stroke="#dcd31a" stroke-width="1.4"/><rect x="1.75" y="3.95" width="10.1" height="5.7" rx="1.5" fill="url(#fg)" stroke="#cb6a0c" stroke-width="1.45"/></svg>
<div class="t" style="left:112.5px;top:243.5px;font-size:11px;line-height:13px;"><span class="sx" style="transform:scaleX(0.81);">panCommonEventEventsV2(0)</span></div>
<div class="hl" style="left:37.9px;top:263.1px;width:10px"></div>
<svg class="fo" style="left:46.7px;top:257.2px" width="13" height="11" viewBox="0 0 13 11"><path d="M0.75 6 V2.8 Q0.75 0.75 2.9 0.75 Q5 0.75 5.7 3.2" fill="#fffbc4" stroke="#dcd31a" stroke-width="1.4"/><rect x="1.75" y="3.95" width="10.1" height="5.7" rx="1.5" fill="url(#fg)" stroke="#cb6a0c" stroke-width="1.45"/></svg>
<div class="t" style="left:64.2px;top:257.0px;font-size:11px;line-height:13px;"><span class="sx" style="transform:scaleX(0.81);">panSpecificMib(2)</span></div>
<div class="hl" style="left:37.9px;top:276.7px;width:10px"></div>
<div class="box" style="left:34.2px;top:273.6px"><i></i></div>
<svg class="fo" style="left:46.7px;top:270.8px" width="13" height="11" viewBox="0 0 13 11"><path d="M0.75 6 V2.8 Q0.75 0.75 2.9 0.75 Q5 0.75 5.7 3.2" fill="#fffbc4" stroke="#dcd31a" stroke-width="1.4"/><rect x="1.75" y="3.95" width="10.1" height="5.7" rx="1.5" fill="url(#fg)" stroke="#cb6a0c" stroke-width="1.45"/></svg>
<div class="t" style="left:64.2px;top:270.6px;font-size:11px;line-height:13px;"><span class="sx" style="transform:scaleX(0.81);">panProductsMibs(3)</span></div>
<div class="hl" style="left:54.0px;top:290.2px;width:10px"></div>
<svg class="fo" style="left:62.8px;top:284.4px" width="13" height="11" viewBox="0 0 13 11"><path d="M0.75 6 V2.8 Q0.75 0.75 2.9 0.75 Q5 0.75 5.7 3.2" fill="#fffbc4" stroke="#dcd31a" stroke-width="1.4"/><rect x="1.75" y="3.95" width="10.1" height="5.7" rx="1.5" fill="url(#fg)" stroke="#cb6a0c" stroke-width="1.45"/></svg>
<div class="t" style="left:80.3px;top:284.1px;font-size:11px;line-height:13px;"><span class="sx" style="transform:scaleX(0.81);">panPA-4050(1)</span></div>
<div class="hl" style="left:54.0px;top:303.8px;width:10px"></div>
<svg class="fo" style="left:62.8px;top:297.9px" width="13" height="11" viewBox="0 0 13 11"><path d="M0.75 6 V2.8 Q0.75 0.75 2.9 0.75 Q5 0.75 5.7 3.2" fill="#fffbc4" stroke="#dcd31a" stroke-width="1.4"/><rect x="1.75" y="3.95" width="10.1" height="5.7" rx="1.5" fill="url(#fg)" stroke="#cb6a0c" stroke-width="1.45"/></svg>
<div class="t" style="left:80.3px;top:297.7px;font-size:11px;line-height:13px;"><span class="sx" style="transform:scaleX(0.81);">panPA-4020(2)</span></div>
<div class="hl" style="left:54.0px;top:317.4px;width:10px"></div>
<svg class="fo" style="left:62.8px;top:311.5px" width="13" height="11" viewBox="0 0 13 11"><path d="M0.75 6 V2.8 Q0.75 0.75 2.9 0.75 Q5 0.75 5.7 3.2" fill="#fffbc4" stroke="#dcd31a" stroke-width="1.4"/><rect x="1.75" y="3.95" width="10.1" height="5.7" rx="1.5" fill="url(#fg)" stroke="#cb6a0c" stroke-width="1.45"/></svg>
<div class="t" style="left:80.3px;top:311.2px;font-size:11px;line-height:13px;"><span class="sx" style="transform:scaleX(0.81);">panPA-2050(3)</span></div>
<div class="hl" style="left:54.0px;top:330.9px;width:10px"></div>
<svg class="fo" style="left:62.8px;top:325.0px" width="13" height="11" viewBox="0 0 13 11"><path d="M0.75 6 V2.8 Q0.75 0.75 2.9 0.75 Q5 0.75 5.7 3.2" fill="#fffbc4" stroke="#dcd31a" stroke-width="1.4"/><rect x="1.75" y="3.95" width="10.1" height="5.7" rx="1.5" fill="url(#fg)" stroke="#cb6a0c" stroke-width="1.45"/></svg>
<div class="t" style="left:80.3px;top:324.8px;font-size:11px;line-height:13px;"><span class="sx" style="transform:scaleX(0.81);">panPA-2020(4)</span></div>
<div class="hl" style="left:54.0px;top:344.4px;width:10px"></div>
<svg class="fo" style="left:62.8px;top:338.6px" width="13" height="11" viewBox="0 0 13 11"><path d="M0.75 6 V2.8 Q0.75 0.75 2.9 0.75 Q5 0.75 5.7 3.2" fill="#fffbc4" stroke="#dcd31a" stroke-width="1.4"/><rect x="1.75" y="3.95" width="10.1" height="5.7" rx="1.5" fill="url(#fg)" stroke="#cb6a0c" stroke-width="1.45"/></svg>
<div class="t" style="left:80.3px;top:338.3px;font-size:11px;line-height:13px;"><span class="sx" style="transform:scaleX(0.81);">panPA-4060(5)</span></div>
<div class="hl" style="left:54.0px;top:358.0px;width:10px"></div>
<svg class="fo" style="left:62.8px;top:352.1px" width="13" height="11" viewBox="0 0 13 11"><path d="M0.75 6 V2.8 Q0.75 0.75 2.9 0.75 Q5 0.75 5.7 3.2" fill="#fffbc4" stroke="#dcd31a" stroke-width="1.4"/><rect x="1.75" y="3.95" width="10.1" height="5.7" rx="1.5" fill="url(#fg)" stroke="#cb6a0c" stroke-width="1.45"/></svg>
<div class="t" style="left:80.3px;top:351.9px;font-size:11px;line-height:13px;"><span class="sx" style="transform:scaleX(0.81);">panPA-500(6)</span></div>
<div class="hl" style="left:54.0px;top:371.6px;width:10px"></div>
<svg class="fo" style="left:62.8px;top:365.7px" width="13" height="11" viewBox="0 0 13 11"><path d="M0.75 6 V2.8 Q0.75 0.75 2.9 0.75 Q5 0.75 5.7 3.2" fill="#fffbc4" stroke="#dcd31a" stroke-width="1.4"/><rect x="1.75" y="3.95" width="10.1" height="5.7" rx="1.5" fill="url(#fg)" stroke="#cb6a0c" stroke-width="1.45"/></svg>
<div class="t" style="left:80.3px;top:365.4px;font-size:11px;line-height:13px;"><span class="sx" style="transform:scaleX(0.81);">panPanorama(7)</span></div>
<div class="hl" style="left:54.0px;top:385.1px;width:10px"></div>
<svg class="fo" style="left:62.8px;top:379.2px" width="13" height="11" viewBox="0 0 13 11"><path d="M0.75 6 V2.8 Q0.75 0.75 2.9 0.75 Q5 0.75 5.7 3.2" fill="#fffbc4" stroke="#dcd31a" stroke-width="1.4"/><rect x="1.75" y="3.95" width="10.1" height="5.7" rx="1.5" fill="url(#fg)" stroke="#cb6a0c" stroke-width="1.45"/></svg>
<div class="t" style="left:80.3px;top:379.0px;font-size:11px;line-height:13px;"><span class="sx" style="transform:scaleX(0.81);">panPA-5060(8)</span></div>
<div class="hl" style="left:54.0px;top:398.7px;width:10px"></div>
<svg class="fo" style="left:62.8px;top:392.8px" width="13" height="11" viewBox="0 0 13 11"><path d="M0.75 6 V2.8 Q0.75 0.75 2.9 0.75 Q5 0.75 5.7 3.2" fill="#fffbc4" stroke="#dcd31a" stroke-width="1.4"/><rect x="1.75" y="3.95" width="10.1" height="5.7" rx="1.5" fill="url(#fg)" stroke="#cb6a0c" stroke-width="1.45"/></svg>
<div class="t" style="left:80.3px;top:392.6px;font-size:11px;line-height:13px;"><span class="sx" style="transform:scaleX(0.81);">panPA-5050(9)</span></div>
<div class="hl" style="left:54.0px;top:412.2px;width:10px"></div>
<svg class="fo" style="left:62.8px;top:406.3px" width="13" height="11" viewBox="0 0 13 11"><path d="M0.75 6 V2.8 Q0.75 0.75 2.9 0.75 Q5 0.75 5.7 3.2" fill="#fffbc4" stroke="#dcd31a" stroke-width="1.4"/><rect x="1.75" y="3.95" width="10.1" height="5.7" rx="1.5" fill="url(#fg)" stroke="#cb6a0c" stroke-width="1.45"/></svg>
<div class="t" style="left:80.3px;top:406.1px;font-size:11px;line-height:13px;"><span class="sx" style="transform:scaleX(0.81);">panPA-5020(11)</span></div>
<div class="hl" style="left:54.0px;top:425.8px;width:10px"></div>
<svg class="fo" style="left:62.8px;top:419.9px" width="13" height="11" viewBox="0 0 13 11"><path d="M0.75 6 V2.8 Q0.75 0.75 2.9 0.75 Q5 0.75 5.7 3.2" fill="#fffbc4" stroke="#dcd31a" stroke-width="1.4"/><rect x="1.75" y="3.95" width="10.1" height="5.7" rx="1.5" fill="url(#fg)" stroke="#cb6a0c" stroke-width="1.45"/></svg>
<div class="t" style="left:80.3px;top:419.6px;font-size:11px;line-height:13px;"><span class="sx" style="transform:scaleX(0.81);">panPA-200(12)</span></div>
<div class="hl" style="left:54.0px;top:439.3px;width:10px"></div>
<svg class="fo" style="left:62.8px;top:433.4px" width="13" height="11" viewBox="0 0 13 11"><path d="M0.75 6 V2.8 Q0.75 0.75 2.9 0.75 Q5 0.75 5.7 3.2" fill="#fffbc4" stroke="#dcd31a" stroke-width="1.4"/><rect x="1.75" y="3.95" width="10.1" height="5.7" rx="1.5" fill="url(#fg)" stroke="#cb6a0c" stroke-width="1.45"/></svg>
<div class="t" style="left:80.3px;top:433.2px;font-size:11px;line-height:13px;"><span class="sx" style="transform:scaleX(0.81);">panPA-3050(17)</span></div>
<div class="hl" style="left:54.0px;top:452.9px;width:10px"></div>
<svg class="fo" style="left:62.8px;top:447.0px" width="13" height="11" viewBox="0 0 13 11"><path d="M0.75 6 V2.8 Q0.75 0.75 2.9 0.75 Q5 0.75 5.7 3.2" fill="#fffbc4" stroke="#dcd31a" stroke-width="1.4"/><rect x="1.75" y="3.95" width="10.1" height="5.7" rx="1.5" fill="url(#fg)" stroke="#cb6a0c" stroke-width="1.45"/></svg>
<div class="t" style="left:80.3px;top:446.8px;font-size:11px;line-height:13px;"><span class="sx" style="transform:scaleX(0.81);">panPA-3020(18)</span></div>
</div>
<div class="a" style="left:475.2px;top:79px;width:13.6px;height:453.2px;background:#fff;border-left:1px solid #dcdcdc;box-sizing:border-box"></div>
<div class="a" style="left:475.2px;top:79px;width:13.6px;height:13.6px;box-sizing:border-box;border:1px solid #dadada;background:#fff"></div>
<svg style="left:478.5px;top:83.7px" width="8" height="6" viewBox="0 0 8 6"><path d="M0.9 4.5 L3.7 1.6 L6.5 4.5" fill="none" stroke="#484848" stroke-width="1.1"/></svg>
<div class="a" style="left:475.2px;top:517.6px;width:13.6px;height:14.2px;box-sizing:border-box;border:1px solid #dadada;background:#fff"></div>
<svg style="left:478.5px;top:521.4px" width="8" height="6" viewBox="0 0 8 6"><path d="M0.9 1.5 L3.7 4.4 L6.5 1.5" fill="none" stroke="#505050" stroke-width="1"/></svg>
<div class="a" style="left:475.8px;top:418.6px;width:13px;height:8.6px;background:#d8d8d8;border-top:1px solid #a8a8a8;border-bottom:1px solid #a8a8a8;box-sizing:border-box"></div>
<div class="a" style="left:228.6px;top:532.2px;width:260.2px;height:13.3px;background:#fff;border-top:1px solid #dcdcdc;box-sizing:border-box"></div>
<div class="a" style="left:228.6px;top:532.2px;width:13.8px;height:13.3px;box-sizing:border-box;border:1px solid #dadada;background:#fff"></div>
<svg style="left:232.6px;top:535px" width="6" height="8" viewBox="0 0 6 8"><path d="M4.6 0.8 L1.4 3.9 L4.6 7" fill="none" stroke="#444" stroke-width="1.1"/></svg>
<div class="a" style="left:459.8px;top:532.2px;width:15.4px;height:13.3px;box-sizing:border-box;border:1px solid #dadada;background:#fff"></div>
<svg style="left:464.4px;top:535px" width="6" height="8" viewBox="0 0 6 8"><path d="M1.4 0.8 L4.6 3.9 L1.4 7" fill="none" stroke="#444" stroke-width="1.1"/></svg>
<div class="a" style="left:304px;top:532.8px;width:137.2px;height:12.7px;background:#dadada"></div>
<div class="a" style="left:370px;top:535.6px;width:1px;height:6.6px;background:#444;box-shadow:2px 0 0 #444,4px 0 0 #444"></div>
<div class="a" style="left:475.2px;top:532.2px;width:13.6px;height:13.3px;background:#f6f1f6"></div>
<div class="btn" style="left:238.2px;top:553px;width:61.8px;height:17.6px;line-height:16.8px"><span class="sx" style="transform:scaleX(0.86);">Help</span></div>
<div class="a" style="left:493.6px;top:77.9px;width:520px;height:469px;background:#fff"></div>
<div class="t" style="left:504.2px;top:80.2px;font-size:12.4px;color:#000"><span class="sx" style="transform:scaleX(1.102);">PAN-GLOBAL-REG:panRoot</span></div>
<div class="t" style="left:510px;top:96.4px;font-size:10px;font-weight:bold;color:#000"><span class="sx" style="transform:scaleX(0.95);">OID:</span></div>
<div class="t" style="left:538.4px;top:96.2px;font-size:10.4px;color:#000"><span class="sx" style="transform:scaleX(0.87);">1.3.6.1.4.1.25461</span></div>
<div class="a" style="left:502.2px;top:113.7px;width:492.6px;height:239.8px;background:#e8eff8"></div>
<div class="t" style="left:514.2px;top:119px;font-size:11.2px;-webkit-text-stroke:0.4px #000;color:#000"><span class="sx" style="transform:scaleX(1.1);">Select a device:</span></div>
<div class="combo" style="left:512.2px;top:135.5px;width:135.4px;height:17.4px"><div class="dd"></div></div>
<svg style="left:635.6px;top:141.9px" width="8" height="6" viewBox="0 0 8 6"><path d="M0.8 1 L3.6 4.4 L6.4 1" fill="none" stroke="#222" stroke-width="1.2"/></svg>
<div class="t" style="left:515.4px;top:138.7px;font-size:11px;line-height:12px"><span class="sx" style="transform:scaleX(0.81);">Vendor</span></div>
<div class="combo" style="left:512.2px;top:155.8px;width:135.4px;height:17.4px"><div class="dd"></div></div>
<svg style="left:635.6px;top:162.2px" width="8" height="6" viewBox="0 0 8 6"><path d="M0.8 1 L3.6 4.4 L6.4 1" fill="none" stroke="#222" stroke-width="1.2"/></svg>
<div class="t" style="left:515.4px;top:158.3px;font-size:11px;line-height:12px"><span class="sx" style="transform:scaleX(0.81);">American Power Conversi</span></div>
<div class="combo" style="left:512.2px;top:176.1px;width:135.4px;height:17.4px"><div class="dd"></div></div>
<svg style="left:635.6px;top:182.5px" width="8" height="6" viewBox="0 0 8 6"><path d="M0.8 1 L3.6 4.4 L6.4 1" fill="none" stroke="#222" stroke-width="1.2"/></svg>
<svg style="left:515.3px;top:179.0px" width="10.9" height="10.9" viewBox="0 0 10 10"><circle cx="5" cy="5" r="4.8" fill="url(#gb)"/><ellipse cx="4.4" cy="2.9" rx="2.4" ry="1.3" fill="#c8f8a0" opacity="0.55"/><circle cx="5.8" cy="7.6" r="0.9" fill="#d8e840" opacity="0.7"/></svg>
<div class="t" style="left:530.6px;top:179.3px;font-size:11px;line-height:12px"><span class="sx" style="transform:scaleX(0.81);">DNKGEVELUPS-254</span></div>
<div class="btn" style="left:654.2px;top:174.6px;width:48.2px;height:19.2px;line-height:17px"><span class="sx" style="transform:scaleX(0.86);">Test</span></div>
<div class="t" style="left:506.3px;top:366.9px;font-size:11.2px;-webkit-text-stroke:0.35px #000;color:#000"><span class="sx" style="transform:scaleX(1.18);">Type:</span></div>
<div class="t" style="left:506.3px;top:385.6px;font-size:11.2px;-webkit-text-stroke:0.35px #000;color:#000"><span class="sx" style="transform:scaleX(1.15);">Units:</span></div>
<div class="t" style="left:506.3px;top:404.6px;font-size:11.2px;-webkit-text-stroke:0.35px #000;color:#000"><span class="sx" style="transform:scaleX(1.125);">Access:</span></div>
<div class="t" style="left:506.3px;top:423.3px;font-size:11.2px;-webkit-text-stroke:0.35px #000;color:#000"><span class="sx" style="transform:scaleX(1.125);">Status:</span></div>
<div class="t" style="left:752.8px;top:403.9px;font-size:9.8px;color:#111"><span class="sx" style="transform:scaleX(0.944);">unknown</span></div>
<div class="t" style="left:752.8px;top:422.5px;font-size:9.8px;color:#111"><span class="sx" style="transform:scaleX(0.944);">unknown</span></div>
<div class="a" style="left:980.6px;top:440px;width:14.2px;height:106.8px;box-sizing:border-box;border:1px solid #d4d4d4;background:#fff"></div>
<div class="a" style="left:980.6px;top:453.4px;width:14.2px;height:1px;background:#d4d4d4"></div>
<div class="a" style="left:980.6px;top:532.6px;width:14.2px;height:1px;background:#d4d4d4"></div>
<svg style="left:983.8px;top:444px" width="8" height="6" viewBox="0 0 8 6"><path d="M0.8 4.6 L3.9 1.4 L7 4.6" fill="none" stroke="#5e5e5e" stroke-width="0.95"/></svg>
<svg style="left:983.8px;top:537px" width="8" height="6" viewBox="0 0 8 6"><path d="M0.8 1.4 L3.9 4.6 L7 1.4" fill="none" stroke="#5e5e5e" stroke-width="0.95"/></svg>
<div class="a" style="left:493.6px;top:546.9px;width:520px;height:30px;background:#f6f1f6"></div>
<div class="btn" style="left:846.2px;top:553px;width:70.6px;height:17.6px;line-height:16.6px"><span class="sx" style="transform:scaleX(0.86);">Select</span></div>
<div class="btn" style="left:923.6px;top:553px;width:70.4px;height:17.6px;line-height:16.6px"><span class="sx" style="transform:scaleX(0.86);">Cancel</span></div>
</div>
</body></html>
